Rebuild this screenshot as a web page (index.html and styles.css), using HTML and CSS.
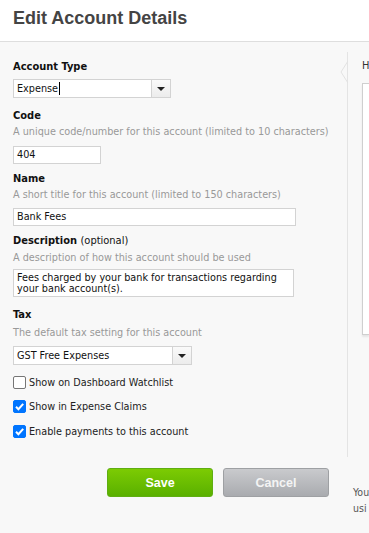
FILE: index.html
```html
<!DOCTYPE html>
<html>
<head>
<meta charset="utf-8">
<link rel="stylesheet" href="styles.css">
</head>
<body>
<header class="top">
  <h1 class="title">Edit Account Details</h1>
</header>
<div class="main">
  <form class="form">
    <div class="field f-type">
      <div class="label">Account Type</div>
      <div class="select select-type">
        <span class="select-value">Expense<span class="caret"></span></span>
        <span class="select-btn"><span class="tri"></span></span>
      </div>
    </div>
    <div class="field f-code">
      <div class="label">Code</div>
      <div class="hint">A unique code/number for this account (limited to 10 characters)</div>
      <div class="input input-code">404</div>
    </div>
    <div class="field f-name">
      <div class="label">Name</div>
      <div class="hint">A short title for this account (limited to 150 characters)</div>
      <div class="input input-name">Bank Fees</div>
    </div>
    <div class="field f-desc">
      <div class="label">Description <span class="opt">(optional)</span></div>
      <div class="hint">A description of how this account should be used</div>
      <div class="input textarea">Fees charged by your bank for transactions regarding your bank account(s).</div>
    </div>
    <div class="field f-tax">
      <div class="label">Tax</div>
      <div class="hint">The default tax setting for this account</div>
      <div class="select select-tax">
        <span class="select-value">GST Free Expenses</span>
        <span class="select-btn"><span class="tri"></span></span>
      </div>
    </div>
    <div class="checks">
      <label class="check"><span class="box"></span>Show on Dashboard Watchlist</label>
      <label class="check"><span class="box on"><svg viewBox="0 0 13 13" width="13" height="13"><path d="M3 6.8 L5.4 9.2 L10.2 3.8" fill="none" stroke="#fff" stroke-width="2"/></svg></span>Show in Expense Claims</label>
      <label class="check"><span class="box on"><svg viewBox="0 0 13 13" width="13" height="13"><path d="M3 6.8 L5.4 9.2 L10.2 3.8" fill="none" stroke="#fff" stroke-width="2"/></svg></span>Enable payments to this account</label>
    </div>
    <div class="actions">
      <button type="button" class="btn save">Save</button>
      <button type="button" class="btn cancel">Cancel</button>
    </div>
  </form>
  <aside class="side">
    <div class="rail">
      <svg class="chev" viewBox="0 0 8 22" width="8" height="22"><path d="M8 0 L1 11 L8 22" fill="none" stroke="#e2e2e2" stroke-width="1"/></svg>
    </div>
    <div class="help">
      <div class="help-title">H</div>
      <div class="help-box"></div>
      <div class="help-note">You<br>usi</div>
    </div>
  </aside>
</div>
</body>
</html>
```
FILE: styles.css
```css
html, body {
  margin: 0;
  padding: 0;
}
body {
  width: 369px;
  height: 533px;
  overflow: hidden;
  background: #f8f8f8;
  font-family: "DejaVu Sans Condensed", "DejaVu Sans", sans-serif;
  font-stretch: condensed;
  color: #000;
}
.top {
  background: #fff;
  height: 42px;
  border-bottom: 1px solid #dedede;
  box-sizing: border-box;
  padding: 7px 13px 0;
}
.title {
  margin: 0;
  font-family: "Liberation Sans", Arial, sans-serif;
  font-stretch: normal;
  font-size: 18px;
  font-weight: bold;
  color: #444;
  line-height: 22px;
}
.main {
  display: flex;
}
.form {
  width: 334px;
  padding: 17px 0 0 13px;
  box-sizing: border-box;
  flex: none;
}
.label {
  font-size: 11px;
  font-weight: bold;
  line-height: 16px;
  color: #111;
}
.opt {
  font-weight: normal;
}
.hint {
  font-size: 10.75px;
  line-height: 16px;
  color: #999;
  white-space: nowrap;
}
.input, .select {
  font-size: 10.75px;
  background: #fff;
  border: 1px solid #d3d3d3;
  box-sizing: border-box;
  height: 18px;
  line-height: 16px;
  padding: 0 3px;
  color: #111;
}
.f-type .select { margin-top: 4px; height: 19px; }
.f-code { margin-top: 10px; }
.f-code .input { margin-top: 6px; }
.f-name { margin-top: 7px; }
.f-name .input { margin-top: 5px; }
.f-desc { margin-top: 7px; }
.f-desc .hint { margin-top: 1px; }
.f-desc .textarea { margin-top: 3px; }
.f-tax { margin-top: 10px; }
.f-tax .hint { margin-top: 2px; }
.f-tax .select { margin-top: 5px; height: 19px; }
.input-code { width: 88px; }
.input-name { width: 283px; }
.textarea {
  width: 281px;
  height: 28px;
  line-height: 11px;
  padding-top: 2px;
  white-space: normal;
}
.select {
  display: flex;
  padding: 0;
}
.select-value {
  flex: 1;
  padding: 0 3px;
  display: flex;
  align-items: center;
}
.caret {
  display: inline-block;
  width: 1px;
  height: 13px;
  background: #000;
  margin-left: 1px;
}
.select-btn {
  width: 18px;
  border-left: 1px solid #d3d3d3;
  background: linear-gradient(#fafafa, #ececec);
  display: flex;
  align-items: center;
  justify-content: center;
}
.tri {
  width: 0;
  height: 0;
  border-left: 4px solid transparent;
  border-right: 4px solid transparent;
  border-top: 4px solid #222;
}
.select-type { width: 158px; }
.select-tax { width: 179px; }
.checks {
  display: flex;
  flex-direction: column;
  gap: 11px;
  margin-top: 11px;
}
.check {
  display: flex;
  align-items: center;
  font-size: 10.75px;
  color: #222;
  height: 13px;
}
.check + .check + .check {
  margin-top: 1px;
}
.box {
  width: 13px;
  height: 13px;
  box-sizing: border-box;
  border: 1px solid #767676;
  border-radius: 2px;
  background: #fff;
  margin-right: 3px;
  flex: none;
  display: flex;
}
.box.on {
  background: #0075ff;
  border-color: #0075ff;
}
.box svg {
  margin: -1px;
}
.actions {
  display: flex;
  gap: 10px;
  margin: 30px 0 0 94px;
}
.btn {
  width: 106px;
  height: 29px;
  border-radius: 3px;
  font-family: "Liberation Sans", Arial, sans-serif;
  font-stretch: normal;
  font-size: 12.5px;
  font-weight: bold;
  color: #fff;
  cursor: pointer;
  padding: 0;
}
.save {
  background: linear-gradient(#7ccb03, #5ab000);
  border: 1px solid #5fae12;
}
.cancel {
  background: linear-gradient(#c9cacd, #a9abaf);
  border: 1px solid #9ea0a3;
  color: #f4f4f4;
}
.side {
  flex: 1;
  display: flex;
  overflow: hidden;
}
.rail {
  width: 13px;
  flex: none;
  border-right: 1px solid #e4e4e4;
  height: 405px;
  margin-top: 10px;
  position: relative;
}
.chev {
  position: absolute;
  right: -1px;
  top: 9px;
}
.help {
  padding: 17px 0 0 14px;
  flex: 1;
  min-width: 0;
}
.help-title {
  font-size: 11px;
  color: #333;
  line-height: 14px;
}
.help-box {
  margin-top: 10px;
  height: 250px;
  background: #fff;
  border: 1px solid #cfcfcf;
  border-right: none;
  box-shadow: 0 2px 2px rgba(0,0,0,0.08);
}
.help-note {
  margin: 149px 0 0 -9px;
  font-size: 10.5px;
  line-height: 16px;
  color: #555;
  white-space: nowrap;
}
```
